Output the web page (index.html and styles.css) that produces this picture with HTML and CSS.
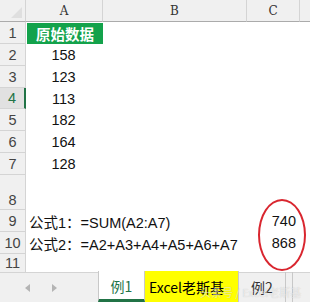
FILE: index.html
```html
<!DOCTYPE html>
<html lang="zh">
<head>
  <meta charset="UTF-8">
  <title>Excel 求和</title>
  <link rel="stylesheet" href="styles.css">
</head>
<body>
  <div class="sheet">
    <div class="grid">
      <div class="corner"><span class="tri"></span></div>
      <div class="colhead">A</div>
      <div class="colhead">B</div>
      <div class="colhead">C</div>
      <div class="colhead edge"></div>

      <div class="rowhead">1</div>
      <div class="cell title">原始数据</div><div class="cell"></div><div class="cell"></div><div class="cell"></div>

      <div class="rowhead">2</div>
      <div class="cell num">158</div><div class="cell"></div><div class="cell"></div><div class="cell"></div>

      <div class="rowhead">3</div>
      <div class="cell num">123</div><div class="cell"></div><div class="cell"></div><div class="cell"></div>

      <div class="rowhead active">4</div>
      <div class="cell num">113</div><div class="cell"></div><div class="cell"></div><div class="cell"></div>

      <div class="rowhead">5</div>
      <div class="cell num">182</div><div class="cell"></div><div class="cell"></div><div class="cell"></div>

      <div class="rowhead">6</div>
      <div class="cell num">164</div><div class="cell"></div><div class="cell"></div><div class="cell"></div>

      <div class="rowhead">7</div>
      <div class="cell num">128</div><div class="cell"></div><div class="cell"></div><div class="cell"></div>

      <div class="rowhead tall">8</div>
      <div class="cell"></div><div class="cell"></div><div class="cell"></div><div class="cell"></div>

      <div class="rowhead">9</div>
      <div class="cell formula">公式1：=SUM(A2:A7)</div><div class="cell result">740</div><div class="cell"></div>

      <div class="rowhead">10</div>
      <div class="cell formula">公式2：=A2+A3+A4+A5+A6+A7</div><div class="cell result">868</div><div class="cell"></div>

      <div class="rowhead">11</div>
      <div class="cell"></div><div class="cell"></div><div class="cell"></div><div class="cell"></div>
    </div>

    <!-- red mark round the two results -->
    <div class="ring"></div>

    <div class="tabs">
      <div class="nav">
        <span class="arrow left"></span>
        <span class="arrow right"></span>
      </div>
      <div class="tab current">例1</div>
      <div class="tab yellow">Excel老斯基</div>
      <div class="tab">例2</div>
      <div class="tab rest"></div>
    </div>
    <div class="mark">头条号 / Excel老斯基</div>
  </div>
</body>
</html>
```

FILE: styles.css
```css
body {
  margin: 0;
  background: #fff;
  font-family: "Liberation Sans", "Noto Sans CJK SC", sans-serif;
}
.sheet {
  position: relative;
  width: 310px;
  height: 302px;
  overflow: hidden;
}
.grid {
  display: grid;
  grid-template-columns: 26px 77px 144px 53px 10px;
  grid-template-rows: 22px 22px 22px 22px 21px 22px 22px 22px 35px 22px 22px 19px;
}
.corner {
  background: #f0f0f0;
  border-right: 1px solid #d4d4d4;
  border-bottom: 1px solid #ababab;
  box-sizing: border-box;
  position: relative;
}
.tri {
  position: absolute;
  right: 3px;
  bottom: 3px;
  width: 0;
  height: 0;
  border-left: 11px solid transparent;
  border-bottom: 11px solid #dfdfdf;
}
.colhead {
  background: #f0f0f0;
  border-right: 1px solid #d4d4d4;
  border-bottom: 1px solid #ababab;
  box-sizing: border-box;
  display: flex;
  align-items: center;
  justify-content: center;
  font-family: "DejaVu Serif", "Liberation Serif", serif;
  font-size: 12px;
  color: #333;
  padding-top: 1px;
}
.colhead.edge {
  border-right: none;
}
.rowhead {
  grid-column: 1;
  background: #f0f0f0;
  border-right: 1px solid #d4d4d4;
  border-bottom: 1px solid #d4d4d4;
  box-sizing: border-box;
  display: flex;
  align-items: center;
  justify-content: center;
  font-size: 14.5px;
  color: #444;
}
.rowhead.active {
  background: #e1e1e1;
  border-right: 2px solid #217346;
  color: #217346;
}
.rowhead.tall {
  align-items: flex-end;
  padding-bottom: 1px;
}
.cell {
  display: flex;
  align-items: center;
  font-size: 14.5px;
  color: #111;
}
.title {
  margin: 1px 0 0 1px;
  background: #13a24b;
  color: #fff;
  font-family: "Noto Sans CJK SC", sans-serif;
  font-weight: bold;
  font-size: 14.5px;
  justify-content: center;
}
.num {
  justify-content: center;
  padding-right: 2px;
}
.formula {
  grid-column: 2 / 4;
  padding-left: 3px;
  font-family: "Liberation Sans", "Noto Sans CJK SC", sans-serif;
  font-size: 14.5px;
  white-space: nowrap;
}
.result {
  justify-content: flex-end;
  padding-right: 4px;
}
.ring {
  position: absolute;
  left: 258px;
  top: 199px;
  width: 44px;
  height: 68px;
  border: 2px solid #d9262f;
  border-radius: 50%;
}
.tabs {
  position: absolute;
  left: 0;
  right: 0;
  bottom: 0;
  height: 29px;
  background: #f0f0f0;
  border-top: 1px solid #d4d4d4;
  display: flex;
  align-items: stretch;
  font-family: "Noto Sans CJK SC", sans-serif;
  font-size: 14px;
}
.nav {
  width: 98px;
  display: flex;
  align-items: center;
  gap: 22px;
  padding-left: 25px;
  box-sizing: border-box;
}
.arrow {
  width: 0;
  height: 0;
  border-top: 4px solid transparent;
  border-bottom: 4px solid transparent;
}
.arrow.left {
  border-right: 5px solid #b4b4b4;
}
.arrow.right {
  border-left: 5px solid #b4b4b4;
}
.tab {
  display: flex;
  align-items: center;
  justify-content: center;
  padding: 0 12px;
  color: #333;
  border-right: 1px solid #c8c8c8;
  margin-top: -1px;
  white-space: nowrap;
}
.tab.current {
  width: 47px;
  box-sizing: border-box;
  padding: 2px 0 0;
  background: #fff;
  color: #217346;
  border-bottom: 3px solid #217346;
  border-left: 1px solid #c8c8c8;
}
.tab.yellow {
  width: 94px;
  box-sizing: border-box;
  background: #ffff00;
  color: #000;
  padding: 0 4px;
  justify-content: flex-start;
}
.tab.current, .tab.yellow {
  margin-top: -2px;
}
.tab.rest {
  width: 6px;
  padding: 0;
}
.mark {
  position: absolute;
  left: 200px;
  bottom: 2px;
  font-family: "Noto Sans CJK SC", sans-serif;
  font-size: 11px;
  color: rgba(255, 255, 255, 0.6);
  text-shadow: 0 0 1px rgba(0, 0, 0, 0.2);
  white-space: nowrap;
}
```
